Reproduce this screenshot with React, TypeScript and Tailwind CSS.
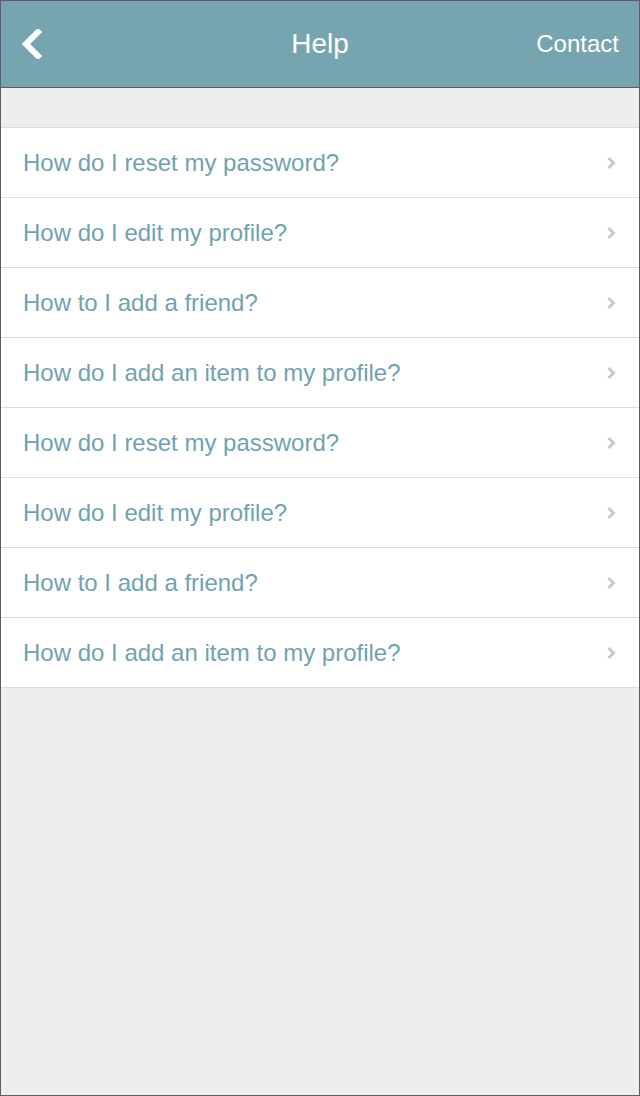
import React from "react";

const questions = [
  "How do I reset my password?",
  "How do I edit my profile?",
  "How to I add a friend?",
  "How do I add an item to my profile?",
  "How do I reset my password?",
  "How do I edit my profile?",
  "How to I add a friend?",
  "How do I add an item to my profile?",
];

function Chevron({ className }: { className?: string }) {
  return (
    <svg viewBox="0 0 10 14" className={className} fill="none">
      <path d="M2 2l5 5-5 5" stroke="currentColor" strokeWidth="3" />
    </svg>
  );
}

export default function App() {
  return (
    <div
      className="flex h-[1096px] w-[640px] flex-col border border-[#5f5f5f] bg-[#eeeeee]"
      style={{ fontFamily: '"Liberation Sans", Arial, sans-serif' }}
    >
      {/* header */}
      <div className="relative flex h-[87px] shrink-0 items-center justify-between border-b border-[#5f5f5f] bg-[#76a5b0] px-[17px] text-white">
        <svg viewBox="0 0 26 30" className="h-[30px] w-[26px]" fill="none">
          <path d="M20 3L8 15l12 12" stroke="white" strokeWidth="6" strokeLinecap="square" />
        </svg>
        <span className="absolute left-1/2 -translate-x-1/2 text-[28px]">Help</span>
        <span className="mr-[3px] text-[24px]">Contact</span>
      </div>

      <div className="h-[39px] shrink-0" />

      {/* list */}
      <ul className="border-t border-[#dcdcdc] bg-white">
        {questions.map((q, i) => (
          <li
            key={i}
            className="flex h-[70px] items-center justify-between border-b border-[#dcdcdc] pl-[22px] pr-[22px]"
          >
            <span className="text-[24px] text-[#6fa3b0]">{q}</span>
            <Chevron className="h-[14px] w-[11px] text-[#c8c8c8]" />
          </li>
        ))}
      </ul>
    </div>
  );
}
